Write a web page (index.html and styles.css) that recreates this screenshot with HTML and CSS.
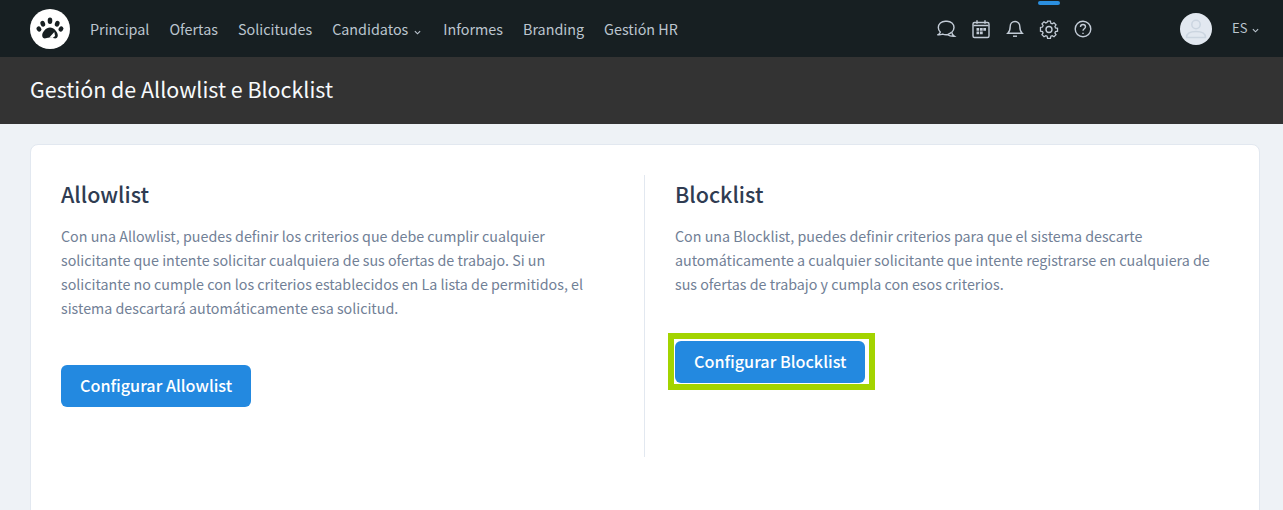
FILE: index.html
```html
<!DOCTYPE html>
<html lang="es">
<head>
<meta charset="utf-8">
<title>Gestión de Allowlist e Blocklist</title>
<link rel="stylesheet" href="styles.css">
</head>
<body>
<header class="nav">
  <div class="logo">
    <svg viewBox="0 0 40 40" width="40" height="40">
      <circle cx="20" cy="20" r="20" fill="#fff"/>
      <g fill="#171f22">
        <ellipse cx="20" cy="11.800" rx="2.300" ry="3.200"/>
        <ellipse cx="12.800" cy="14.800" rx="2.300" ry="3" transform="rotate(-20 12.800 14.800)"/>
        <ellipse cx="27.200" cy="14.800" rx="2.300" ry="3" transform="rotate(20 27.200 14.800)"/>
        <ellipse cx="9" cy="20" rx="2.200" ry="2.700" transform="rotate(-40 9 20)"/>
        <ellipse cx="31" cy="20" rx="2.200" ry="2.700" transform="rotate(40 31 20)"/>
        <path d="M20 18.500c3.900 0 7.800 4.400 7.800 8 0 2.200-1.800 3.200-3.600 2.800-1.500-.3-2.900-.8-4.200-.8s-2.700.5-4.200.8c-1.800.4-3.600-.6-3.600-2.800 0-3.600 3.900-8 7.800-8z"/>
      </g>
      <path d="M19.300 28.500l5-5.500.8 4-2.500 2z" fill="#fff"/>
    </svg>
  </div>
  <nav class="menu">
    <a>Principal</a>
    <a>Ofertas</a>
    <a>Solicitudes</a>
    <a>Candidatos<svg class="chev chev-menu" viewBox="0 0 8 5" width="7" height="5"><path d="M1 1l3 3 3-3"/></svg></a>
    <a>Informes</a>
    <a>Branding</a>
    <a>Gestión HR</a>
  </nav>
  <div class="tools">
    <svg class="ico" viewBox="0 0 20 20" width="20" height="20"><path d="M10 2.200c4 0 7 2.800 7 6.400 0 2-.8 3.500-2.200 4.700.2 1.600.9 3 2.400 3.900-2.600.1-5-.3-6.600-1.500-.9.100-3.300.2-4.900-.6-.9.300-3 .7-4.500.6 1.200-.7 1.800-1.500 2.100-2.600-1.200-1.200-2-2.800-2-4.500 0-3.600 3.200-6.400 7-6.400z"/><path d="M14.500 13.300c-1 1-2.400 1.700-3.900 2.400"/></svg>
    <svg class="ico" viewBox="0 0 20 20" width="20" height="20"><rect x="2" y="3.500" width="16" height="15" rx="1.500"/><path d="M6 1.200v3.600M14 1.200v3.600M2.500 6.500h15"/><path class="solid" d="M5.500 9h2.700v2.700H5.500zM9 9h2.700v2.700H9zM12.300 9H15v2.700h-2.700zM5.500 12.500h2.700v2.700H5.500zM9 12.500h2.700v2.700H9z"/></svg>
    <svg class="ico" viewBox="0 0 20 20" width="20" height="20"><path d="M10 2.500c-3 0-4.800 2.300-4.800 5 0 4-.9 5.300-2.400 6.700h14.400c-1.500-1.400-2.400-2.700-2.400-6.700 0-2.700-1.800-5-4.800-5z"/><path d="M8 17.200h4"/></svg>
    <svg class="ico" viewBox="0 0 20 20" width="20" height="20"><path d="M8.400 1.800h3.200l.5 2.300 1.500.7 2-1.300 2.300 2.300-1.300 2 .7 1.500 2.300.5v3.200l-2.300.5-.7 1.500 1.300 2-2.300 2.300-2-1.300-1.500.7-.5 2.300H8.400l-.5-2.300-1.500-.7-2 1.300-2.300-2.300 1.300-2-.7-1.500-2.300-.5V8.800l2.300-.5.7-1.500-1.300-2 2.300-2.300 2 1.300 1.500-.7z" transform="translate(1.100 .6) scale(.89)"/><circle cx="10" cy="10.500" r="3"/></svg>
    <svg class="ico" viewBox="0 0 20 20" width="20" height="20"><circle cx="10" cy="10" r="7.800"/><path d="M7.500 8c0-1.500 1.100-2.500 2.500-2.500s2.500 1 2.500 2.300c0 2-2.500 2-2.500 4"/><path d="M10 13.700v1.300"/></svg>
  </div>
  <div class="avatar">
    <svg viewBox="0 0 32 32" width="32" height="32"><circle cx="16" cy="11.500" r="4.200"/><path d="M6.500 24.500c0-4 3-6 9.500-6s9.500 2 9.500 6z"/></svg>
  </div>
  <div class="lang">ES<svg class="chev" viewBox="0 0 8 5" width="7" height="5"><path d="M1 1l3 3 3-3"/></svg></div>
  <span class="active-mark"></span>
</header>
<section class="titlebar"><h1>Gestión de Allowlist e Blocklist</h1></section>
<main class="page">
  <div class="card">
    <div class="col col-left">
      <h2>Allowlist</h2>
      <p>Con una Allowlist, puedes definir los criterios que debe cumplir cualquier solicitante que intente solicitar cualquiera de sus ofertas de trabajo. Si un solicitante no cumple con los criterios establecidos en La lista de permitidos, el sistema descartará automáticamente esa solicitud.</p>
      <button class="btn">Configurar Allowlist</button>
    </div>
    <div class="col col-right">
      <h2>Blocklist</h2>
      <p>Con una Blocklist, puedes definir criterios para que el sistema descarte automáticamente a cualquier solicitante que intente registrarse en cualquiera de sus ofertas de trabajo y cumpla con esos criterios.</p>
      <div class="marked">
        <button class="btn">Configurar Blocklist</button>
        <span class="marker"></span>
      </div>
    </div>
  </div>
</main>
</body>
</html>
```

FILE: styles.css
```css
* { box-sizing: border-box; }
html, body { margin: 0; height: 100%; overflow: hidden; }
body {
  background: #eef2f6;
  font-family: "Noto Sans CJK SC", "Source Sans Pro", "Noto Sans", sans-serif;
  color: #2d3748;
}
.nav {
  position: relative;
  height: 57px;
  background: #171f22;
  display: flex;
  align-items: center;
  padding: 0 30px;
}
.logo { width: 40px; height: 40px; margin-top: 1px; }
.logo svg { display: block; }
.menu {
  display: flex;
  gap: 20px;
  margin-left: 20px;
  margin-top: 1px;
  color: #bcc5cf;
  font-size: 14.350px;
  line-height: 20px;
}
.menu a { white-space: nowrap; }
.chev { fill: none; stroke: currentColor; stroke-width: 1.300; margin-left: 5px; vertical-align: 0; }
.chev-menu { margin-left: 6px; margin-right: 2px; }
.tools {
  display: flex;
  gap: 14px;
  position: absolute;
  left: 937px;
  top: 19px;
  color: #c3ccd7;
}
.ico { fill: none; stroke: currentColor; stroke-width: 1.400; display: block; }
.ico .solid { fill: currentColor; stroke: none; }
.avatar {
  position: absolute;
  left: 1180px;
  top: 13px;
  width: 32px;
  height: 32px;
  border-radius: 50%;
  background: #e2e8f0;
}
.avatar svg { display: block; fill: none; stroke: #cbd5e0; stroke-width: 1.500; }
.lang {
  position: absolute;
  left: 1232px;
  top: 18px;
  font-size: 13px;
  line-height: 20px;
  color: #bcc5cf;
  white-space: nowrap;
}
.active-mark {
  position: absolute;
  left: 1038px;
  top: 1px;
  width: 22px;
  height: 4px;
  border-radius: 2px;
  background: #2b8fe0;
}
.titlebar {
  height: 67px;
  background: #333;
  padding: 0 30px 4px;
  display: flex;
  align-items: center;
}
h1 {
  margin: 0;
  font-size: 21.450px;
  font-weight: 400;
  line-height: 30px;
  color: #f7fafc;
}
.page { padding: 20px 23px 0 30px; }
.card {
  background: #fff;
  border: 1px solid #e2e8f0;
  border-radius: 8px;
  height: 400px;
  padding: 30px;
  display: grid;
  grid-template-columns: 584px 1fr;
}
.col { height: 282px; }
.col-left { padding-right: 30px; border-right: 1px solid #e2e8f0; }
.col-right { padding-left: 30px; }
h2 {
  margin: 0;
  font-size: 21.500px;
  font-weight: 500;
  line-height: 38px;
  color: #2f3c52;
}
p {
  margin: 11px 0 0;
  font-size: 14.280px;
  line-height: 24px;
  color: #718096;
}
.btn {
  display: block;
  border: 0;
  border-radius: 6px;
  background: #2389e0;
  color: #fff;
  font-family: inherit;
  font-size: 16.200px;
  font-weight: 500;
  height: 42px;
  padding: 0 19px 2px;
  line-height: 40px;
  margin-top: 45px;
}
.marked { position: relative; width: max-content; }
.marker {
  position: absolute;
  left: -7px;
  right: -10px;
  top: -8px;
  bottom: -7px;
  border: 6px solid #a3d400;
}
```
